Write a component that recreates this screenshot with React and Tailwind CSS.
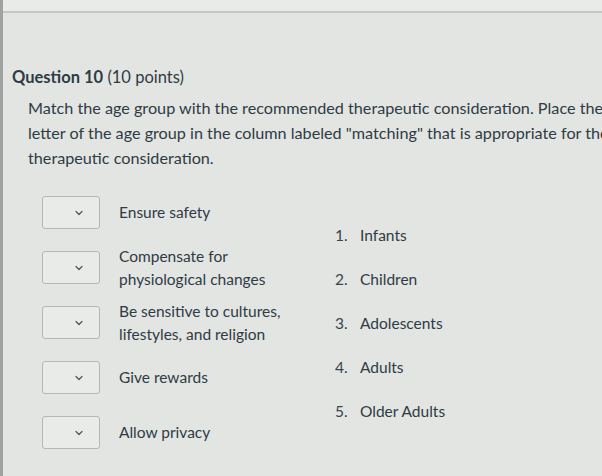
import React from 'react';
import { ChevronDown } from 'lucide-react';

const prompts = [
  ['Ensure safety'],
  ['Compensate for', 'physiological changes'],
  ['Be sensitive to cultures,', 'lifestyles, and religion'],
  ['Give rewards'],
  ['Allow privacy'],
];

const answers = ['Infants', 'Children', 'Adolescents', 'Adults', 'Older Adults'];

const SelectBox = () => (
  <div className="flex h-[33px] w-[58px] shrink-0 items-center justify-end rounded-[3px] border border-[#b3b7b6] bg-[#e9ebe9] pr-[14px]">
    <ChevronDown size={12} strokeWidth={2.5} className="text-[#4d5862]" />
  </div>
);

export default function App() {
  return (
    <div
      className="h-[476px] w-[602px] overflow-hidden border-l-[3px] border-[#9ea2a1] bg-[#e3e5e2] text-[#2f3b44]"
      style={{ fontFamily: 'Lato, "Open Sans", sans-serif' }}
    >
      <div className="h-[13px] border-b-2 border-[#c3c7c5] bg-[#e9ebe9]" />

      <div className="pl-[9px] pt-[52px]">
        <h2 className="text-[16.5px] leading-[24px]">
          <span className="font-bold">Question 10</span> (10 points)
        </h2>

        <div className="mt-[6px] pl-[16px] text-[16.2px] leading-[25px]">
          <p className="whitespace-nowrap">
            Match the age group with the recommended therapeutic consideration. Place the
          </p>
          <p className="whitespace-nowrap">
            letter of the age group in the column labeled "matching" that is appropriate for the
          </p>
          <p className="whitespace-nowrap">therapeutic consideration.</p>
        </div>

        <div className="mt-[15px] flex pl-[30px] text-[15.5px]">
          <div className="flex w-[293px] flex-col">
            {prompts.map((lines, i) => (
              <div key={i} className="flex h-[55px] items-center gap-[19px]">
                <SelectBox />
                <div className="leading-[23px]">
                  {lines.map((l) => (
                    <div key={l}>{l}</div>
                  ))}
                </div>
              </div>
            ))}
          </div>

          <ol className="flex flex-col pt-[29px]">
            {answers.map((a, i) => (
              <li key={a} className="flex h-[44px] items-center">
                <span className="w-[25px] text-[#3a444c]">{i + 1}.</span>
                <span>{a}</span>
              </li>
            ))}
          </ol>
        </div>
      </div>
    </div>
  );
}
